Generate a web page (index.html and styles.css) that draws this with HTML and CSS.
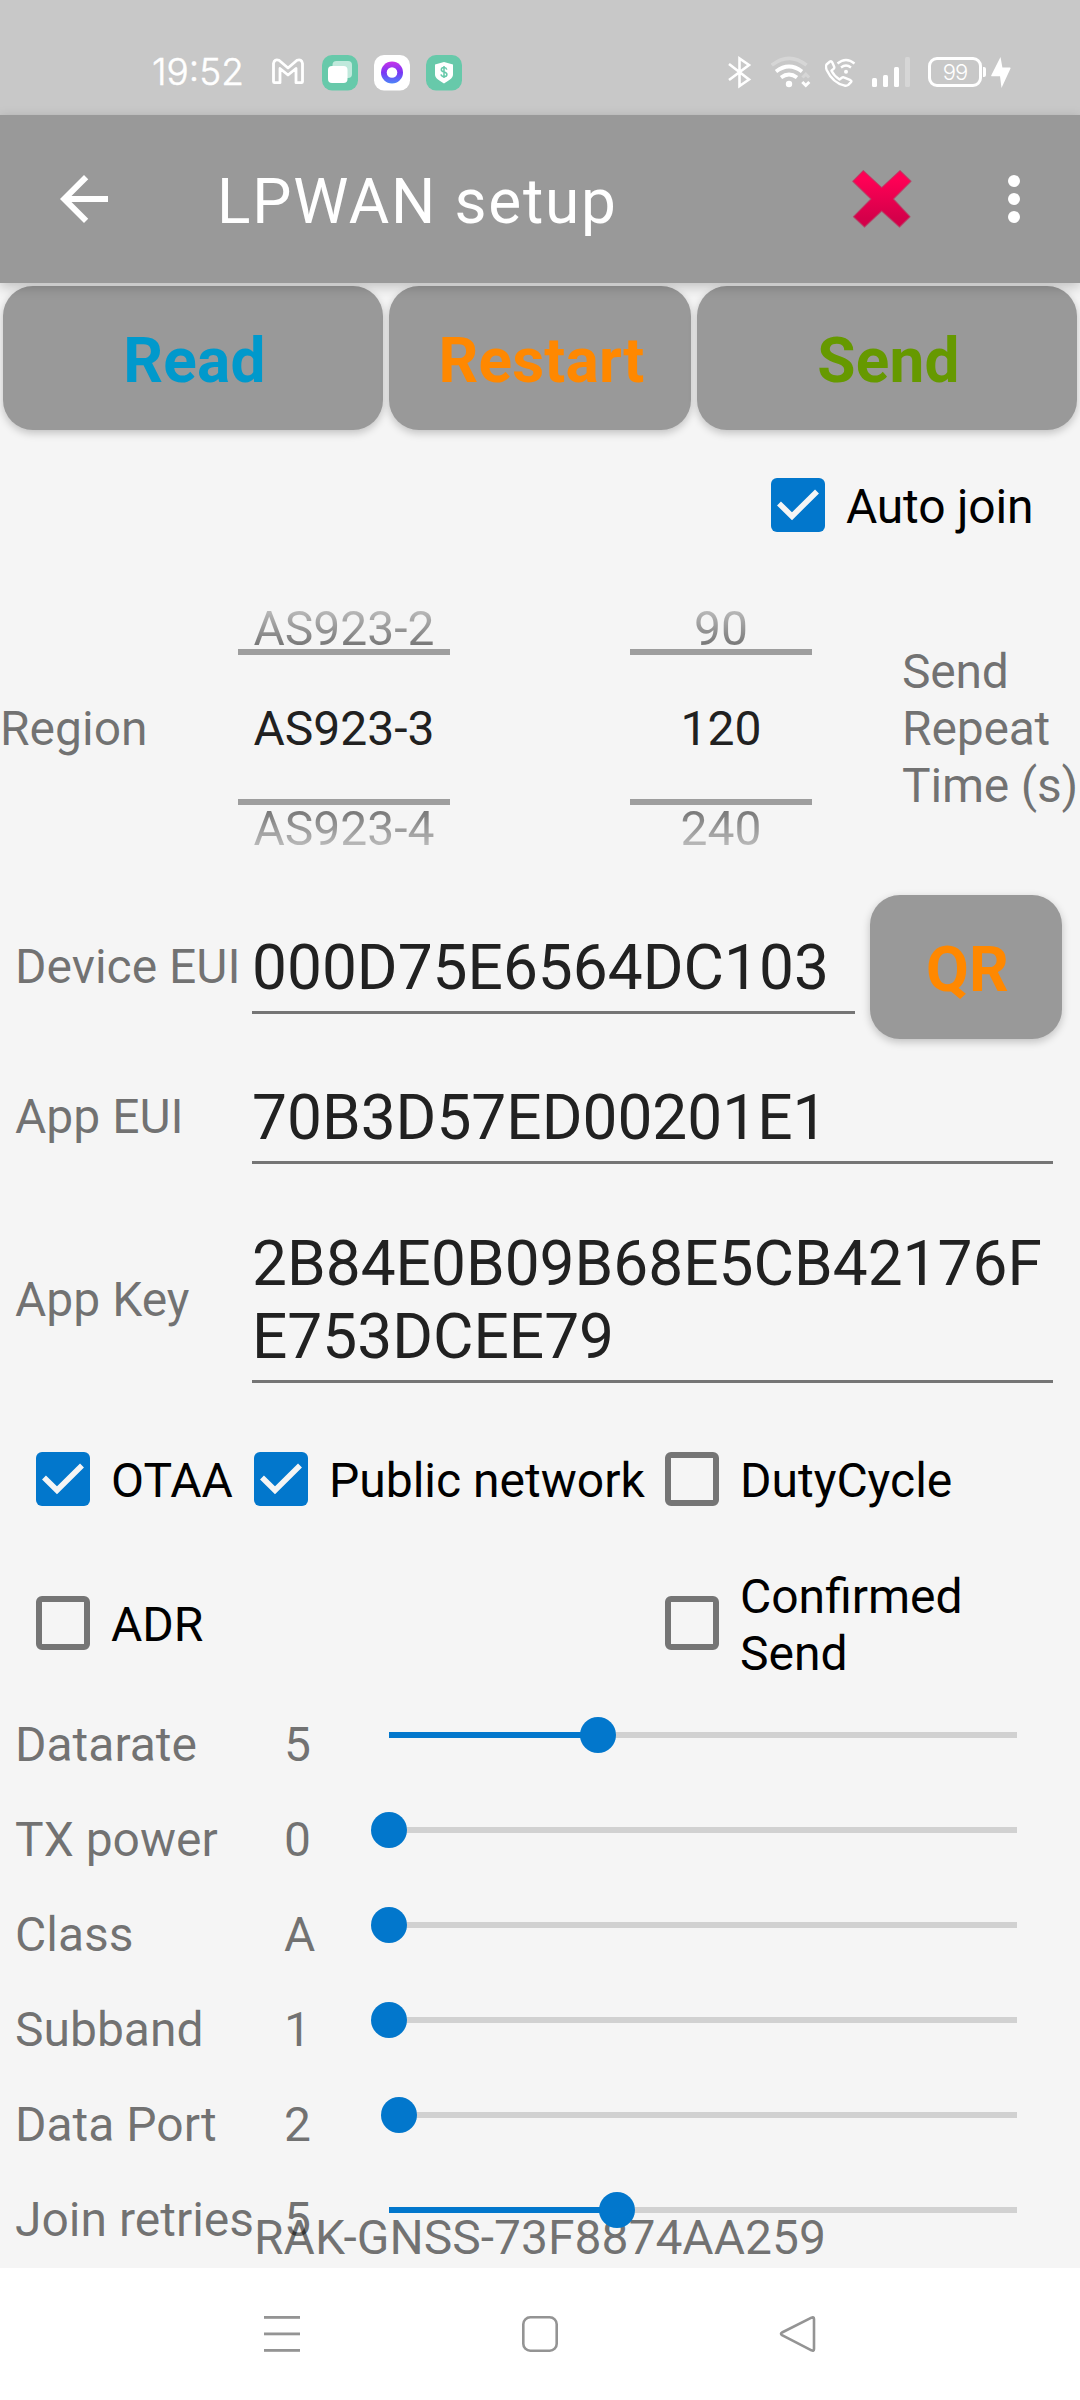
FILE: index.html
```html
<!DOCTYPE html>
<html lang="en">
<head>
<meta charset="utf-8">
<title>LPWAN setup</title>
<link rel="stylesheet" href="styles.css">
</head>
<body>
<header class="status">
  <span class="clock">19:52</span>
  <svg class="gmail" width="34" height="36" viewBox="271 54 34 36" fill="none" stroke="#fff" stroke-width="2.8" stroke-linejoin="round"><path d="M273.500 63.500v18.200q0 1 1 1h5.500V68.500l8 6.500 8-6.500v14.200h5.500q1 0 1-1V63.500q-1-5-5.500-3.200l-9 7.700-9-7.700q-4.500-1.800-5.500 3.200z"/></svg>
  <svg class="app" width="36" height="36" viewBox="0 0 36 36"><rect width="36" height="35.500" rx="10" fill="#67c9aa"/><rect x="10.500" y="6" width="19.500" height="17" rx="4" fill="#c0e9dc"/><rect x="6" y="11" width="19.500" height="17" rx="4" fill="#fff"/></svg>
  <svg class="app" width="36" height="36" viewBox="0 0 36 36"><defs><linearGradient id="ring" x1="0" y1="0" x2="0" y2="1"><stop offset="0" stop-color="#c832e8"/><stop offset=".5" stop-color="#7a35f5"/><stop offset="1" stop-color="#4c86f8"/></linearGradient></defs><rect width="36" height="35.500" rx="10" fill="#fff"/><circle cx="18" cy="17.500" r="11" fill="url(#ring)"/><circle cx="18" cy="17.500" r="5.300" fill="#fff"/></svg>
  <svg class="app" width="36" height="36" viewBox="0 0 36 36"><rect width="36" height="35.500" rx="10" fill="#67c9aa"/><path d="M18 7l9 2.500v10c0 4-5 6.500-9 9-4-2.500-9-5-9-9v-10z" fill="#fff"/><path d="M20.800 14.600q-.5-2-2.800-2-2.700 0-2.700 2.200 0 1.600 2.700 2.200 2.900.6 2.900 2.400 0 2.200-2.900 2.200-2.600 0-3-2.200M18 11v12" fill="none" stroke="#67c9aa" stroke-width="1.500"/></svg>
  <span class="spacer"></span>
  <svg width="24" height="36" viewBox="728 54 24 36" fill="none" stroke="#fff" stroke-width="2.600"><path d="M729 64l20 15.500-9.500 6.500V58.500l9.500 6.500-20 15"/></svg>
  <svg class="wifi" width="40" height="36" viewBox="771 54 40 36" fill="none"><path d="M771.800 65.200Q789 51.500 806.500 65.200" stroke="#d6d6d6" stroke-width="3.600"/><path d="M776 71.500Q789 61.500 802 71.500M781 77.500Q789 71.500 797 77.500" stroke="#fff" stroke-width="3.800"/><circle cx="789" cy="84" r="3.200" fill="#fff"/><path d="M802.500 77.500l3.300-3.300 3.300 3.300" stroke="#d6d6d6" stroke-width="3"/><path d="M802.300 82l3.500 3.500 3.500-3.500" stroke="#fff" stroke-width="3"/></svg>
  <svg class="call" width="31" height="36" viewBox="825 54 31 36" fill="none" stroke="#fff"><path d="M826.500 64.500l3.500-3q1.300-.8 2.200.8l2 4.500q.4 1.200-.6 2l-2.100 1.900q2.500 5 8 8.800l2.300-1.800q1-.8 2-.3l6.700 2.800q1.500.8.500 2l-2.700 2.700q-1.500 1.200-3.500.8-12-2.800-18-15.500-1.500-3.500-.3-5.700zM831.500 70.700l2.400-2M839.500 79.500l2.300-1.800" stroke-width="2.400" stroke-linejoin="round"/><path d="M837.500 63.500q8.500-7 17 0M841 67.500q5-4 10 0" stroke-width="2.300"/><circle cx="846" cy="71.700" r="2" fill="#fff" stroke="none"/></svg>
  <svg class="signal" width="39" height="36" viewBox="872 54 39 36" fill="#fff"><rect x="872" y="78" width="5" height="9" rx="1.500"/><rect x="883" y="75" width="5" height="12" rx="1.500"/><rect x="894" y="67" width="5" height="20" rx="1.500"/><rect x="905" y="57" width="5" height="30" rx="1.500" fill="#d6d6d6"/></svg>
  <span class="battery">99</span>
  <svg class="bolt" width="20" height="36" viewBox="991 54 20 36" fill="#fff"><path d="M1000.500 57L991.300 75.200q-.4 1 .6 1H1000l1.500 11.800 9-19.500q.3-1-.6-1h-7.500z"/></svg>
</header>

<nav class="appbar">
  <svg width="72" height="72" viewBox="0 0 24 24" fill="#fff"><path d="M20 11H7.830l5.590-5.590L12 4l-8 8 8 8 1.410-1.410L7.830 13H20v-2z"/></svg>
  <h1 class="title">LPWAN setup</h1>
  <svg class="close" width="64" height="62" viewBox="850 168 64 62"><defs><linearGradient id="cross" x1="0" y1="0" x2="0" y2="1"><stop offset=".15" stop-color="#ff0055"/><stop offset=".85" stop-color="#d4004a"/></linearGradient></defs><path d="M863.300 170.600l18.400 17 18.300-17 11 10.700-17.600 17.700 16.600 17.700-10.500 10.300-17.800-16-17.200 16-11-10.300L871 199l-18.300-17.700z" fill="url(#cross)" stroke="#b83a62" stroke-opacity=".7" stroke-width="1.200" stroke-linejoin="round"/></svg>
  <svg class="more" width="12" height="48" viewBox="0 0 12 48" fill="#fff"><circle cx="6" cy="6" r="6"/><circle cx="6" cy="24" r="6"/><circle cx="6" cy="42" r="6"/></svg>
</nav>

<main class="content">
  <div class="actions">
    <button class="btn read">Read</button>
    <button class="btn restart">Restart</button>
    <button class="btn send">Send</button>
  </div>

  <div class="autojoin"><label class="check"><span class="box on"><svg viewBox="0 0 54 54"><path d="M8 25.500l13 12.700L46 13.500"/></svg></span>Auto join</label></div>

  <div class="pickers">
    <span class="label">Region</span>
    <div class="picker region"><span class="prev">AS923-2</span><span class="current">AS923-3</span><span class="next">AS923-4</span></div>
    <div class="picker repeat"><span class="prev">90</span><span class="current">120</span><span class="next">240</span></div>
    <span class="label">Send Repeat Time (s)</span>
  </div>

  <div class="field device"><span class="label">Device EUI</span><span class="value">000D75E6564DC103</span><button class="btn qr">QR</button></div>
  <div class="field app-eui"><span class="label">App EUI</span><span class="value">70B3D57ED00201E1</span></div>
  <div class="field app-key"><span class="label">App Key</span><span class="value">2B84E0B09B68E5CB42176F<br>E753DCEE79</span></div>

  <div class="checks first">
    <label class="check"><span class="box on"><svg viewBox="0 0 54 54"><path d="M8 25.500l13 12.700L46 13.500"/></svg></span>OTAA</label>
    <label class="check"><span class="box on"><svg viewBox="0 0 54 54"><path d="M8 25.500l13 12.700L46 13.500"/></svg></span>Public network</label>
    <label class="check"><span class="box"></span>DutyCycle</label>
  </div>
  <div class="checks second">
    <label class="check"><span class="box"></span>ADR</label>
    <span></span>
    <label class="check"><span class="box"></span>Confirmed<br>Send</label>
  </div>

  <p class="device-name">RAK-GNSS-73F8874AA259</p>

  <div class="sliders">
    <div class="slider"><span>Datarate</span><span>5</span><div class="track"><i class="fill" style="width:209px"></i><i class="thumb"></i></div></div>
    <div class="slider"><span>TX power</span><span>0</span><div class="track"><i class="fill" style="width:0"></i><i class="thumb"></i></div></div>
    <div class="slider"><span>Class</span><span>A</span><div class="track"><i class="fill" style="width:0"></i><i class="thumb"></i></div></div>
    <div class="slider"><span>Subband</span><span>1</span><div class="track"><i class="fill" style="width:0"></i><i class="thumb"></i></div></div>
    <div class="slider"><span>Data Port</span><span>2</span><div class="track"><i class="fill" style="width:10px"></i><i class="thumb"></i></div></div>
    <div class="slider"><span>Join retries</span><span>5</span><div class="track"><i class="fill" style="width:228px"></i><i class="thumb"></i></div></div>
  </div>
</main>

<footer class="sysnav">
  <svg width="40" height="40" viewBox="0 0 40 40" fill="#949494"><rect x="2" y="2" width="36" height="2.800"/><rect x="2" y="18.500" width="36" height="2.800"/><rect x="2" y="35" width="36" height="2.800"/></svg>
  <svg width="40" height="40" viewBox="0 0 40 40" fill="none" stroke="#949494" stroke-width="2.600"><rect x="3.300" y="3.300" width="33.400" height="33.400" rx="7"/></svg>
  <svg width="40" height="40" viewBox="0 0 40 40" fill="none" stroke="#949494" stroke-width="2.600" stroke-linejoin="round"><path d="M33.500 3.700L4 18.500q-2 1.300 0 2.600l29.500 15.200q2.500 1 2.500-1.300V5q0-2.300-2.500-1.300z"/></svg>
</footer>
</body>
</html>
```
FILE: styles.css
```css
* { box-sizing: border-box; }

body {
  margin: 0;
  width: 1080px;
  height: 2400px;
  display: flex;
  flex-direction: column;
  overflow: hidden;
  background: #fff;
  font: 48px/57px Roboto, sans-serif;
  color: #000;
}

svg { display: block; flex: none; }

/* System status bar */
.status {
  height: 115px;
  flex: none;
  display: flex;
  align-items: center;
  padding: 29px 69px 0 152px;
  background: #c8c8c8;
  color: #fff;
}
.clock { width: 119px; font: 300 37px/40px Inter, sans-serif; -webkit-text-stroke: .5px #fff; }
.gmail { margin-right: 17px; }
.app { margin-right: 16px; position: relative; top: 1px; }
.spacer { flex: 1; }
.wifi { margin-left: 19px; }
.call { margin-left: 14px; }
.signal { margin-left: 16px; }
.battery {
  position: relative;
  width: 54px;
  height: 30px;
  margin-left: 17px;
  border: 3px solid #fff;
  border-radius: 9px;
  font: 300 22px/24px Inter, sans-serif;
  letter-spacing: -1px;
  text-align: center;
}
.battery::after {
  content: "";
  position: absolute;
  left: 52px;
  top: 7px;
  width: 3px;
  height: 10px;
  border-radius: 0 2px 2px 0;
  background: #fff;
}
.bolt { margin-left: 9px; }

/* App bar */
.appbar {
  height: 168px;
  flex: none;
  display: flex;
  align-items: center;
  padding: 0 60px 0 48px;
  background: #999;
  box-shadow: 0 4px 12px rgba(0, 0, 0, .22);
  color: #fff;
  position: relative;
  z-index: 2;
}
.title {
  flex: 1;
  margin: 0;
  padding: 4px 0 0 97px;
  font-size: 62.1px;
  line-height: 73px;
  font-weight: 400;
  letter-spacing: 1.8px;
}
.close { margin-right: 94px; }

/* Screen content */
.content {
  position: relative;
  height: 1985px;
  flex: none;
  overflow: hidden;
  background: #f5f5f5;
}

.btn {
  border: 0;
  border-radius: 30px;
  background: #999;
  box-shadow: 0 3px 8px rgba(0, 0, 0, .22);
  padding: 4px 0 0 3px;
  font: 700 62.1px/73px Roboto, sans-serif;
  letter-spacing: .2px;
  text-align: center;
}
.read { color: #0099cc; }
.restart, .qr { color: #ff8800; }
.send { color: #669900; }

.actions {
  height: 150px;
  padding: 3px;
  display: grid;
  grid-template-columns: 380px 302px 380px;
  gap: 6px;
}

.check { display: flex; align-items: center; gap: 21px; white-space: nowrap; }
.box {
  flex: none;
  position: relative;
  top: -1.5px;
  width: 54px;
  height: 54px;
  border: 6px solid #757575;
  border-radius: 6px;
}
.box.on { border: 0; background: #0277cc; }
.box path { fill: none; stroke: #f5f5f5; stroke-width: 5.6; }

.autojoin { height: 147px; padding-left: 771px; display: flex; letter-spacing: -.2px; }

.pickers {
  height: 300px;
  margin-top: -3px;
  display: grid;
  grid-template-columns: 238px 212px 180px 182px 178px;
  align-items: center;
}
.label { color: rgba(0, 0, 0, .54); }
.pickers .label { padding-top: 3px; }
.pickers .label:last-child { grid-column: 5; margin-left: 90px; width: 180px; letter-spacing: -.2px; }
.repeat { grid-column: 4; }
.picker { display: grid; grid-template-rows: 72px 156px 72px; text-align: center; color: #212121; }
.prev, .next { color: transparent; -webkit-background-clip: text; background-clip: text; }
.prev {
  padding-top: 31px;
  line-height: 41px;
  background-image: linear-gradient(#bcbcbc 32px, #747474 70px);
}
.current { border: 6px solid #9e9e9e; border-width: 6px 0; line-height: 147px; height: 156px; }
.next {
  line-height: 47px;
  background-image: linear-gradient(#747474 4px, #bcbcbc 42px);
}

.field { display: grid; grid-template-columns: 237px 1fr; align-items: center; padding: 0 27px 0 15px; }
.field .label { padding-bottom: 1px; }
.device { height: 180px; grid-template-columns: 237px 603px 207px; padding-right: 0; }
.app-eui { height: 120px; }
.app-key { height: 236px; padding-top: 9px; }
.value {
  padding: 11px 0 7px;
  border-bottom: 3px solid #757575;
  font-size: 62.2px;
  line-height: 73px;
  color: #212121;
}
.qr { height: 144px; width: 192px; margin-left: 15px; }

.checks { display: grid; grid-template-columns: 218px 411px 1fr; padding-left: 36px; align-items: center; }
.checks .check { padding-top: 3px; }
.first { height: 132px; }
.second { height: 156px; }

.slider {
  height: 95px;
  padding: 15px 0 0 15px;
  display: grid;
  grid-template-columns: 269px 105px 628px;
  color: rgba(0, 0, 0, .54);
}
.track { position: relative; height: 6px; margin-top: 16px; background: #d1d1d1; display: flex; }
.fill { background: #0277cc; }
.thumb {
  flex: none;
  width: 36px;
  height: 36px;
  margin: -15px 0 0 -18px;
  border-radius: 50%;
  background: #0277cc;
}

/* Connected device name lies over the end of the slider list */
.device-name {
  position: absolute;
  left: 254px;
  bottom: 2px;
  margin: 0;
  color: rgba(0, 0, 0, .54);
}

/* System navigation bar */
.sysnav {
  flex: 1;
  display: flex;
  justify-content: center;
  gap: 218px;
  padding-top: 46px;
}
```
